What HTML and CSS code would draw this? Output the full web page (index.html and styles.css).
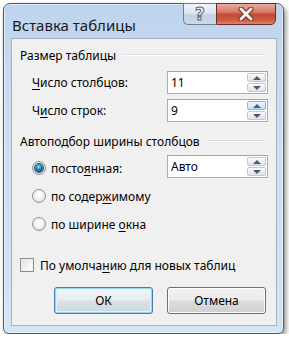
FILE: index.html
```html
<!DOCTYPE html>
<html lang="ru">
<head>
<meta charset="utf-8">
<link rel="stylesheet" href="styles.css">
</head>
<body>
<div class="window">
  <div class="titlebar">
    <div class="title">Вставка таблицы</div>
    <div class="caption-btns">
      <div class="cap help"><span class="q">?</span></div>
      <div class="cap close">
        <svg width="20" height="14" viewBox="0 0 20 14">
          <path d="M5 2 L15 12 M15 2 L5 12" stroke="#6a3028" stroke-width="5" stroke-linecap="round"/>
          <path d="M5 2 L15 12 M15 2 L5 12" stroke="#f6f1ef" stroke-width="3" stroke-linecap="round"/>
        </svg>
      </div>
    </div>
  </div>
  <div class="panel">
    <div class="group-head g1"><span>Размер таблицы</span><i class="sep"></i></div>
    <div class="row r1">
      <span class="label"><u>Ч</u>исло столбцов:</span>
      <div class="spin"><span class="val">11</span><div class="arrows"><b class="up"></b><b class="down"></b></div></div>
    </div>
    <div class="row r2">
      <span class="label">Ч<u>и</u>сло строк:</span>
      <div class="spin"><span class="val">9</span><div class="arrows"><b class="up hot"></b><b class="down"></b></div></div>
    </div>
    <div class="group-head g2"><span>Автоподбор ширины столбцов</span><i class="sep"></i></div>
    <div class="radio-row first">
      <span class="radio on"></span><span class="rlabel">посто<u>я</u>нная:</span>
      <div class="spin auto"><span class="val">Авто</span><div class="arrows"><b class="up"></b><b class="down"></b></div></div>
    </div>
    <div class="radio-row">
      <span class="radio"></span><span class="rlabel">по содер<u>ж</u>имому</span>
    </div>
    <div class="radio-row">
      <span class="radio"></span><span class="rlabel">по ширине <u>о</u>кна</span>
    </div>
    <div class="check-row">
      <span class="check"></span><span class="clabel">По умолча<u>н</u>ию для новых таблиц</span>
    </div>
    <div class="buttons">
      <div class="btn default">ОК</div>
      <div class="btn">Отмена</div>
    </div>
  </div>
</div>
</body>
</html>
```

FILE: styles.css
```css
html, body {
  margin: 0;
  padding: 0;
  background: #ffffff;
}
body {
  font-family: "Noto Sans", "Open Sans", sans-serif;
  font-size: 12px;
  color: #000;
}
.window {
  box-sizing: border-box;
  margin: 3px 0 0 3px;
  width: 281px;
  height: 331px;
  border: 1px solid #4b5868;
  border-radius: 7px 7px 6px 6px;
  background: linear-gradient(180deg, #bed4ec 0%, #cadcf1 30%, #d3e4f6 100%);
  box-shadow: 2px 3px 5px rgba(0,0,0,0.45), inset 0 0 0 1px rgba(255,255,255,0.6);
  padding: 0 6px 7px 7px;
  display: flex;
  flex-direction: column;
}
.titlebar {
  height: 34px;
  display: flex;
  justify-content: space-between;
  align-items: flex-start;
}
.title {
  font-family: "Noto Sans", sans-serif;
  font-size: 15px;
  margin: 12px 0 0 1px;
  line-height: 18px;
  color: #1a1a1a;
}
.caption-btns {
  display: flex;
  margin-top: -1px;
  margin-right: 1px;
}
.cap {
  box-sizing: border-box;
  height: 22px;
  display: flex;
  align-items: center;
  justify-content: center;
}
.help {
  width: 33px;
  border: 1px solid #6e7c8c;
  border-right: none;
  border-radius: 0 0 0 5px;
  background: linear-gradient(180deg, #eef3f9 0%, #dde6f0 45%, #c3d1e1 55%, #cdd9e7 100%);
}
.q {
  font-family: "DejaVu Sans", sans-serif;
  font-size: 17px;
  font-weight: bold;
  color: #f4f6f9;
  -webkit-text-stroke: 1px #5d6672;
  line-height: 20px;
}
.close {
  width: 60px;
  border: 1px solid #6a2e26;
  border-radius: 0 0 5px 0;
  background: linear-gradient(180deg, #e6ab9e 0%, #d97b68 40%, #c74a33 52%, #cc5a40 80%, #dc8466 100%);
}
.panel {
  flex: 1;
  border: 1px solid #a3b2c3;
  background: #f0f0f0;
  padding: 0 8px 0 8px;
  display: flex;
  flex-direction: column;
}
.group-head {
  display: flex;
  align-items: center;
  height: 18px;
}
.g1 { margin-top: 7px; }
.g2 { margin-top: 10px; }
.group-head .sep {
  flex: 1;
  height: 0;
  border-top: 1px solid #d5dfe5;
  border-bottom: 1px solid #ffffff;
  margin-left: 6px;
  margin-right: 4px;
}
.row {
  display: flex;
  align-items: center;
  justify-content: space-between;
  padding-left: 12px;
  height: 23px;
}
.r1 { margin-top: 7px; }
.r2 { margin-top: 5px; }
.spin {
  box-sizing: border-box;
  width: 101px;
  height: 23px;
  border: 1px solid #abadb3;
  border-top-color: #a0a3aa;
  background: #fff;
  display: flex;
  align-items: center;
  justify-content: space-between;
  padding: 1px 1px 1px 3px;
}
.val {
  font-size: 12px;
}
.arrows {
  display: flex;
  flex-direction: column;
  gap: 1px;
  width: 19px;
  height: 19px;
}
.arrows b {
  flex: 1;
  box-sizing: border-box;
  border: 1px solid #c2c8d2;
  border-radius: 2px;
  background: linear-gradient(180deg, #fafbfc 0%, #eceff3 50%, #dde2e8 100%);
  position: relative;
}
.arrows b.hot {
  border-color: #8db2d3;
  background: linear-gradient(180deg, #eaf5fd 0%, #d7ecfb 50%, #bcdff7 100%);
}
.arrows b::after {
  content: "";
  position: absolute;
  left: 50%;
  top: 50%;
  margin-left: -4px;
  border-left: 4px solid transparent;
  border-right: 4px solid transparent;
}
.arrows b.up::after {
  margin-top: -2px;
  border-bottom: 4px solid #4a5b72;
}
.arrows b.down::after {
  margin-top: -2px;
  border-top: 4px solid #4a5b72;
}
.radio-row {
  display: flex;
  align-items: center;
  height: 28px;
  padding-left: 12px;
}
.radio-row.first { margin-top: 4px; }
.radio {
  box-sizing: border-box;
  width: 14px;
  height: 14px;
  border-radius: 50%;
  border: 1px solid #8e9194;
  background: radial-gradient(circle at 50% 40%, #ffffff 0%, #f2f2f2 45%, #cfcfcf 100%);
  margin-right: 5px;
  position: relative;
}
.radio.on::after {
  content: "";
  position: absolute;
  left: 2px;
  top: 2px;
  width: 8px;
  height: 8px;
  border-radius: 50%;
  background: radial-gradient(circle at 45% 35%, #a9dcf5 0%, #2f86bd 35%, #124a73 80%, #0d3a5c 100%);
  box-shadow: 0 0 0 1px #234f74;
}
.rlabel { flex: 1; }
.auto { margin-top: -3px; }
.check-row {
  display: flex;
  align-items: center;
  margin-top: 19px;
  height: 16px;
}
.check {
  box-sizing: border-box;
  width: 14px;
  height: 14px;
  border: 1px solid #8e8f8f;
  background: linear-gradient(135deg, #dcdcdc 0%, #f4f4f4 60%, #ffffff 100%);
  box-shadow: inset 0 0 0 1px #f0f0f0;
  margin-right: 6px;
}
.buttons {
  display: flex;
  justify-content: flex-end;
  gap: 14px;
  margin-top: 14px;
  padding-right: 2px;
}
.btn {
  box-sizing: border-box;
  width: 99px;
  height: 27px;
  border: 1px solid #707070;
  border-radius: 3px;
  background: linear-gradient(180deg, #f2f2f2 0%, #ebebeb 49%, #dddddd 51%, #cfcfcf 100%);
  box-shadow: inset 0 0 0 1px #fcfcfc;
  display: flex;
  align-items: center;
  justify-content: center;
}
.btn.default {
  border-color: #3c7fb1;
  background: linear-gradient(180deg, #f1f5f7 0%, #e7edf0 49%, #d9e2e6 51%, #cdd8dd 100%);
  box-shadow: inset 0 0 0 1px #9fd4ee, inset 0 0 0 2px #e3f2f9;
}
u {
  text-decoration: underline;
  text-underline-offset: 2px;
}
```
